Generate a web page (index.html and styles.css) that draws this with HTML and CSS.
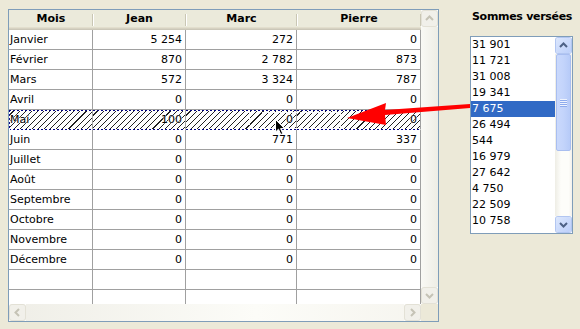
FILE: index.html
```html
<!DOCTYPE html>
<html lang="fr">
<head>
    <meta charset="UTF-8">
    <meta name="viewport" content="width=device-width, initial-scale=1.0">
    <title>Sommes versées</title>
    <link rel="stylesheet" href="styles.css">
</head>
<body>
<div class="page">

    <div class="grid">
        <div class="cells">
            <div class="row head">
                <div class="h">Mois</div>
                <div class="h">Jean</div>
                <div class="h">Marc</div>
                <div class="h">Pierre</div>
            </div>
            <div class="row"><div class="m">Janvier</div><div>5 254</div><div>272</div><div>0</div></div>
            <div class="row"><div class="m">Février</div><div>870</div><div>2 782</div><div>873</div></div>
            <div class="row"><div class="m">Mars</div><div>572</div><div>3 324</div><div>787</div></div>
            <div class="row"><div class="m">Avril</div><div>0</div><div>0</div><div>0</div></div>
            <div class="row drag"><div class="m">Mai</div><div>100</div><div>0</div><div>0</div></div>
            <div class="row"><div class="m">Juin</div><div>0</div><div>771</div><div>337</div></div>
            <div class="row"><div class="m">Juillet</div><div>0</div><div>0</div><div>0</div></div>
            <div class="row"><div class="m">Août</div><div>0</div><div>0</div><div>0</div></div>
            <div class="row"><div class="m">Septembre</div><div>0</div><div>0</div><div>0</div></div>
            <div class="row"><div class="m">Octobre</div><div>0</div><div>0</div><div>0</div></div>
            <div class="row"><div class="m">Novembre</div><div>0</div><div>0</div><div>0</div></div>
            <div class="row"><div class="m">Décembre</div><div>0</div><div>0</div><div>0</div></div>
            <div class="row"><div class="m"></div><div></div><div></div><div></div></div>
            <div class="row"><div class="m"></div><div></div><div></div><div></div></div>

            <!-- drag feedback -->
            <div class="drag-ghost"></div>
            <svg class="cursor" width="11" height="17" viewBox="0 0 11 17">
                <path d="M0.5 0.5 L0.5 13 L3.5 10.2 L5.8 15.5 L7.8 14.6 L5.6 9.6 L9.5 9.6 Z" fill="#000" stroke="#fff" stroke-width="1"/>
            </svg>
        </div>

        <div class="vscroll">
            <div class="sbtn"><svg width="15" height="15" viewBox="0 0 15 15"><polyline points="4,9 7.5,5.5 11,9" /></svg></div>
            <div class="sbtn"><svg width="15" height="15" viewBox="0 0 15 15"><polyline points="4,6 7.5,9.5 11,6" /></svg></div>
        </div>
        <div class="hscroll">
            <div class="sbtn"><svg width="15" height="15" viewBox="0 0 15 15"><polyline points="9,4 5.5,7.5 9,11" /></svg></div>
            <div class="sbtn"><svg width="15" height="15" viewBox="0 0 15 15"><polyline points="6,4 9.5,7.5 6,11" /></svg></div>
        </div>
        <div class="corner"></div>
    </div>

    <div class="side">
        <div class="side-title">Sommes versées</div>
        <div class="listbox">
            <ul class="items">
                <li>31 901</li>
                <li>11 721</li>
                <li>31 008</li>
                <li>19 341</li>
                <li class="selected">7 675</li>
                <li>26 494</li>
                <li>544</li>
                <li>16 979</li>
                <li>27 642</li>
                <li>4 750</li>
                <li>22 509</li>
                <li>10 758</li>
            </ul>
            <div class="lscroll">
                <div class="lbtn"><svg width="15" height="15" viewBox="0 0 15 15"><polyline points="4,9 7.5,5.5 11,9" /></svg></div>
                <div class="thumb"><span class="grip"></span></div>
                <div class="track"></div>
                <div class="lbtn"><svg width="15" height="15" viewBox="0 0 15 15"><polyline points="4,6 7.5,9.5 11,6" /></svg></div>
            </div>
        </div>
    </div>

    <svg class="red-arrow" width="580" height="329" viewBox="0 0 580 329">
        <polygon points="347,118 386,103 385,110 470,104 470,108 385,115 386,125" fill="#f00"/>
    </svg>

</div>
</body>
</html>
```

FILE: styles.css
```css
body {
    margin: 0;
    background-color: #ece9d8;
    font-family: "DejaVu Sans", Verdana, sans-serif;
    font-size: 11px;
    color: #000;
}

.page {
    position: relative;
    width: 580px;
    height: 329px;
    box-sizing: border-box;
    padding: 9px 0 0 8px;
    display: flex;
    align-items: flex-start;
}

/* ---- grid ---- */

.grid {
    width: 431px;
    height: 313px;
    box-sizing: border-box;
    border: 1px solid #7f9db9;
    display: grid;
    grid-template-columns: 412px 17px;
    grid-template-rows: 294px 17px;
    background-color: #fff;
}

.cells {
    position: relative;
    overflow: hidden;
}

.row {
    display: grid;
    grid-template-columns: 84px 93px 111px 124px;
    height: 20px;
}

    .row > div {
        box-sizing: border-box;
        border-right: 1px solid #a0a0a0;
        border-bottom: 1px solid #a0a0a0;
        line-height: 19px;
        padding: 0 3px 0 1px;
        text-align: right;
        white-space: nowrap;
        overflow: hidden;
    }

    .row > .m {
        text-align: left;
    }

.head > .h {
    border: none;
    font-weight: bold;
    text-align: center;
    line-height: 18px;
    padding: 0;
    background:
        linear-gradient(#c9c6b4, #c9c6b4) no-repeat right 4px / 1px 12px,
        linear-gradient(#fff, #fff) no-repeat left 4px / 1px 12px,
        #ebeadb;
    box-shadow: inset 0 -1px #cbc7b8, inset 0 -2px #d6d2c2, inset 0 -3px #e2decd;
}

    .head > .h:first-child {
        background:
            linear-gradient(#c9c6b4, #c9c6b4) no-repeat right 4px / 1px 12px,
            #ebeadb;
    }

.drag > div {
    border-bottom-color: transparent;
    background:
        linear-gradient(90deg, #000080 50%, #fff 50%) repeat-x left top / 4px 1px,
        linear-gradient(90deg, #000080 50%, #fff 50%) repeat-x left bottom / 4px 1px,
        repeating-linear-gradient(135deg, #fff 0 3.5px, #222 3.5px 4.3px);
    background-origin: border-box;
    text-shadow: 0 0 1px #fff, 0 0 1px #fff, 0 0 2px #fff;
}

    .drag > .m {
        background:
            linear-gradient(#000080 50%, #fff 50%) repeat-y left top / 1px 4px,
            linear-gradient(90deg, #000080 50%, #fff 50%) repeat-x left top / 4px 1px,
            linear-gradient(90deg, #000080 50%, #fff 50%) repeat-x left bottom / 4px 1px,
            repeating-linear-gradient(135deg, #fff 0 3.5px, #222 3.5px 4.3px);
        background-origin: border-box;
    }

.drag-ghost {
    position: absolute;
    left: 240px;
    top: 102px;
    width: 90px;
    height: 15px;
    border: 1px dotted rgba(255, 255, 255, 0.95);
}

.cursor {
    position: absolute;
    left: 266px;
    top: 109px;
}

/* ---- disabled scrollbars of the grid ---- */

.vscroll {
    display: flex;
    flex-direction: column;
    justify-content: space-between;
    background: linear-gradient(90deg, #f9f9f5, #eeede5);
}

.hscroll {
    display: flex;
    justify-content: space-between;
    background: linear-gradient(90deg, #efeee7, #fcfcf8 60%, #f6f5ef);
}

.corner {
    background-color: #ece9d8;
}

.sbtn {
    width: 17px;
    height: 17px;
    box-sizing: border-box;
    border: 1px solid #fff;
    display: flex;
    align-items: center;
    justify-content: center;
}

    .sbtn svg {
        display: block;
        background: #f1f0ea;
        border-radius: 2px;
        box-shadow: 0 0 0 1px #e3e1d6;
    }

    .sbtn polyline {
        fill: none;
        stroke: #c5c3b6;
        stroke-width: 2;
    }

/* ---- list of amounts ---- */

.side {
    margin-left: 31px;
}

.side-title {
    font-weight: bold;
    line-height: 14px;
    padding: 1px 0 0 2px;
    letter-spacing: -0.3px;
}

.listbox {
    margin-top: 12px;
    width: 103px;
    height: 198px;
    box-sizing: border-box;
    border: 1px solid #7f9db9;
    background-color: #fff;
    display: flex;
}

.items {
    list-style: none;
    margin: 0;
    padding: 0;
    flex: 1;
}

    .items li {
        height: 16px;
        line-height: 16px;
        padding-left: 1px;
        white-space: nowrap;
    }

    .items .selected {
        background-color: #316ac5;
        color: #fff;
    }

.lscroll {
    width: 17px;
    display: flex;
    flex-direction: column;
    background: linear-gradient(90deg, #eeede5, #fdfdfa 35%, #fdfdfa 80%, #f3f1ec);
}

.lbtn {
    height: 17px;
    box-sizing: border-box;
    border: 1px solid #fff;
    display: flex;
    align-items: center;
    justify-content: center;
}

    .lbtn svg {
        display: block;
        border-radius: 2px;
        background: linear-gradient(135deg, #dce7fd, #bccffa);
        box-shadow: 0 0 0 1px #b2c6f1;
    }

    .lbtn polyline {
        fill: none;
        stroke: #4d6185;
        stroke-width: 2;
    }

.thumb {
    height: 97px;
    box-sizing: border-box;
    margin: 0 1px;
    border: 1px solid #a9bef0;
    border-radius: 2px;
    background: linear-gradient(90deg, #cad9fc, #c3d4fb 50%, #b7cbf8);
    display: flex;
    align-items: center;
    justify-content: center;
}

.grip {
    width: 7px;
    height: 8px;
    background: repeating-linear-gradient(#eef3fe 0 1px, #8eabed 1px 2px);
}

.track {
    flex: 1;
}

.red-arrow {
    position: absolute;
    left: 0;
    top: 0;
    pointer-events: none;
}
```
